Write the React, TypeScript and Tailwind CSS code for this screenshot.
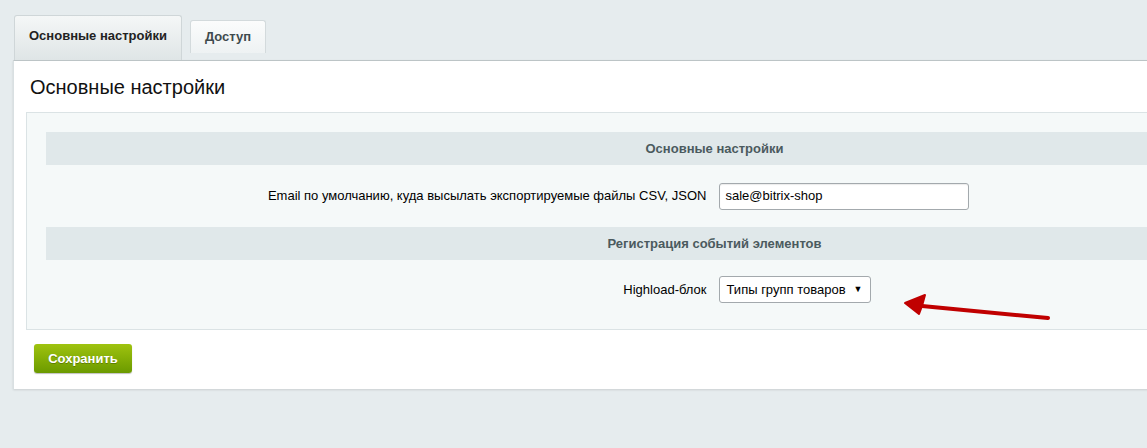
import React from 'react';

function Arrow() {
  return (
    <svg
      className="pointer-events-none absolute left-[900px] top-[292px]"
      width="160"
      height="36"
      viewBox="0 0 160 36"
    >
      <path d="M148 26 L22 14" stroke="#c00000" strokeWidth="4" strokeLinecap="round" />
      <path d="M5 11 L25 3 L22 14 L19 22 Z" fill="#c00000" stroke="#c00000" strokeWidth="2" strokeLinejoin="round" />
    </svg>
  );
}

export default function App() {
  return (
    <div
      className="relative h-[448px] w-[1147px] overflow-hidden bg-[#e6ecee] pt-[15px] pl-[13px]"
      style={{ fontFamily: '"Liberation Sans", Arial, sans-serif' }}
    >
      {/* tabs */}
      <div className="flex h-[45px] items-end gap-[8px] pl-[1px]">
        <div className="flex h-[45px] w-[168px] items-center justify-center rounded-t-[3px] border border-b-0 border-[#cfd6d8] bg-gradient-to-b from-[#f5f7f7] to-[#dfe5e6] pb-[5px] text-[13px] font-bold text-[#222]">
          Основные настройки
        </div>
        <div className="mb-[7px] flex h-[33px] w-[76px] items-center justify-center rounded-t-[3px] border border-b-0 border-[#d3dadc] bg-gradient-to-b from-[#fbfcfc] to-[#eef2f3] text-[13px] font-bold text-[#3f4b4e]">
          Доступ
        </div>
      </div>

      {/* panel */}
      <div className="w-[1390px] border-t border-l border-t-[#bcc4c6] border-l-[#d9e0e2] bg-white pb-[16px] shadow-[0_1px_2px_rgba(0,0,0,0.12)]">
        <div className="px-[16px] pt-[14px] pb-[13px] text-[20px] leading-[24px] text-[#111]">Основные настройки</div>
        <div className="ml-[12px] border border-[#dbe3e5] bg-[#f5f9f9] px-[19px] pt-[19px] pb-[10px]">
          <div className="flex h-[33px] items-center justify-center bg-[#e0e8ea] text-[13px] font-bold text-[#4b5a5e]">
            Основные настройки
          </div>
          <div className="flex h-[62px] items-center">
            <div className="w-1/2 pr-[8px] text-right text-[13px] text-[#000]">
              Email по умолчанию, куда высылать экспортируемые файлы CSV, JSON
            </div>
            <div className="w-1/2 pl-[4px]">
              <div className="flex h-[27px] w-[250px] items-center rounded-[3px] border border-[#a3a9ad] bg-white px-[6px] text-[13px] text-[#000] shadow-[inset_0_1px_1px_rgba(0,0,0,0.08)]">
                sale@bitrix-shop
              </div>
            </div>
          </div>
          <div className="flex h-[33px] items-center justify-center bg-[#e0e8ea] text-[13px] font-bold text-[#4b5a5e]">
            Регистрация событий элементов
          </div>
          <div className="flex h-[59px] items-center">
            <div className="w-1/2 pr-[8px] text-right text-[13px] text-[#000]">Highload-блок</div>
            <div className="w-1/2 pl-[4px]">
              <div className="flex h-[27px] w-[152px] items-center justify-between rounded-[3px] border border-[#a3a9ad] bg-white pr-[7px] pl-[7px] text-[13px] text-[#000]">
                <span>Типы групп товаров</span>
                <span className="text-[9px]">▼</span>
              </div>
            </div>
          </div>
        </div>
        <div className="pt-[14px] pl-[20px]">
          <div className="flex h-[29px] w-[98px] items-center justify-center rounded-[3px] bg-gradient-to-b from-[#9fc30f] to-[#6b9a00] text-[13px] font-bold text-white shadow-[0_1px_1px_rgba(0,0,0,0.25)] [text-shadow:0_1px_0_rgba(0,0,0,0.25)]">
            Сохранить
          </div>
        </div>
      </div>
      <Arrow />
    </div>
  );
}
